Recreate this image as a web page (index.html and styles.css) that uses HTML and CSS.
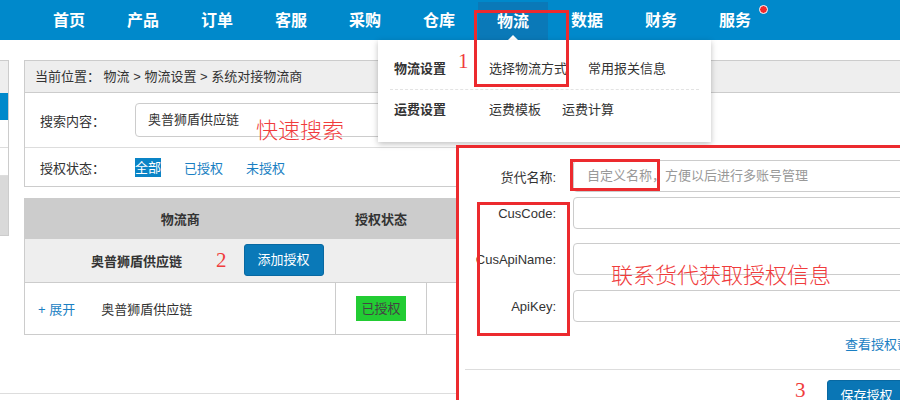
FILE: index.html
```html
<!DOCTYPE html>
<html>
	<head>
		<meta charset="utf-8">
		<title>系统对接物流商</title>
		<link rel="stylesheet" href="styles.css">
	</head>
	<body>
		<ul class="nav">
			<li>首页</li>
			<li>产品</li>
			<li>订单</li>
			<li>客服</li>
			<li>采购</li>
			<li>仓库</li>
			<li class="on">物流</li>
			<li>数据</li>
			<li>财务</li>
			<li class="has-dot">服务<i class="dot"></i></li>
		</ul>
		<div class="wrap">
			<div class="side">
				<div class="side-top"></div>
				<div class="side-on"></div>
				<div class="side-row"></div>
				<div class="side-row"></div>
				<div class="side-gray"></div>
			</div>
			<div class="main">
				<div class="box">
					<div class="crumb">当前位置：&nbsp;物流 &gt; 物流设置 &gt; 系统对接物流商</div>
					<div class="search">
						<span class="lbl">搜索内容：</span>
						<div class="ipt">奥普狮盾供应链</div>
					</div>
					<div class="status">
						<span class="lbl">授权状态：</span>
						<a class="sel" href="#">全部</a>
						<a href="#">已授权</a>
						<a href="#">未授权</a>
					</div>
				</div>
				<table class="list">
					<tr class="head">
						<th class="c1">物流商</th>
						<th class="c2">授权状态</th>
						<th></th>
					</tr>
					<tr class="group">
						<td colspan="3">
							<div class="group-in">
								<b>奥普狮盾供应链</b>
								<span class="num">2</span>
								<a class="btn" href="#">添加授权</a>
							</div>
						</td>
					</tr>
					<tr class="row">
						<td class="c1"><a class="open" href="#">+ 展开</a><span class="name">奥普狮盾供应链</span></td>
						<td class="c2"><span class="badge">已授权</span></td>
						<td></td>
					</tr>
				</table>
			</div>
		</div>
		<div class="foot"></div>

		<!-- 物流下拉菜单 -->
		<div class="drop">
			<div class="drop-row first">
				<b>物流设置</b>
				<a href="#">选择物流方式</a>
				<a href="#">常用报关信息</a>
			</div>
			<div class="drop-row">
				<b>运费设置</b>
				<a href="#">运费模板</a>
				<a href="#">运费计算</a>
			</div>
		</div>

		<!-- 授权弹窗 -->
		<div class="dialog">
			<div class="frow r1">
				<label>货代名称:</label>
				<div class="field ph">自定义名称，方便以后进行多账号管理</div>
			</div>
			<div class="frow r2">
				<label>CusCode:</label>
				<div class="field"></div>
			</div>
			<div class="frow r3">
				<label>CusApiName:</label>
				<div class="field"></div>
			</div>
			<div class="frow r4">
				<label>ApiKey:</label>
				<div class="field"></div>
			</div>
			<div class="help"><a href="#">查看授权帮助</a></div>
			<div class="dialog-foot">
				<span class="num">3</span>
				<a class="btn" href="#">保存授权</a>
			</div>
		</div>

		<!-- 标注 -->
		<div class="mark mark-nav"></div>
		<div class="mark mark-ph"></div>
		<div class="mark mark-lbl"></div>
		<span class="note num n1">1</span>
		<span class="note tip t-search">快速搜索</span>
		<span class="note tip t-info">联系货代获取授权信息</span>
	</body>
</html>
```

FILE: styles.css
```css
*{
	margin: 0;
	padding: 0;
	box-sizing: border-box;
}
ul{
	list-style: none;
}
a{
	text-decoration: none;
	color: #1a7fc3;
}
body{
	position: relative;
	width: 900px;
	height: 400px;
	overflow: hidden;
	background: #fff;
	color: #333;
	font-family: "Liberation Sans", "Noto Sans CJK SC", sans-serif;
	font-size: 13px;
}

/* 顶部导航 */
.nav{
	display: flex;
	gap: 4px;
	height: 40px;
	padding-left: 34px;
	background-color: #0089cb;
}
.nav li{
	position: relative;
	width: 70px;
	height: 40px;
	line-height: 42px;
	text-align: center;
	color: #fff;
	font-size: 16px;
	font-weight: bold;
}
.nav .on{
	margin-top: 2px;
	height: 38px;
	line-height: 40px;
	background-color: #0a79b8;
}
.nav .on:after{
	content: "";
	position: absolute;
	left: 30px;
	bottom: 0;
	border: 5px solid transparent;
	border-bottom-color: #fff;
}
.nav .dot{
	position: absolute;
	top: 5px;
	left: 59px;
	width: 9px;
	height: 9px;
	border-radius: 50%;
	background-color: #f2292c;
	border: 1px solid #fff;
}

/* 主体 */
.wrap{
	display: flex;
	align-items: flex-start;
	padding-top: 20px;
}
.side{
	flex: none;
	width: 9px;
	border: 1px solid #ccc;
	border-left: 0;
}
.side-top{
	height: 32px;
	background: #eee;
}
.side-on{
	height: 27px;
	background: #0089cb;
}
.side-row{
	height: 28px;
	border-bottom: 1px solid #ddd;
}
.side-gray{
	height: 59px;
	background: #d9d9d9;
}
.main{
	flex: none;
	width: 900px;
	margin-left: 15px;
}
.box{
	border: 1px solid #ccc;
}
.crumb{
	height: 32px;
	line-height: 32px;
	padding-left: 10px;
	background: #eee;
	border-bottom: 1px solid #ccc;
}
.search{
	display: flex;
	align-items: center;
	height: 54px;
	padding-left: 15px;
}
.lbl{
	width: 95px;
}
.ipt{
	width: 520px;
	height: 34px;
	line-height: 32px;
	padding-left: 12px;
	border: 1px solid #ccc;
	border-radius: 4px;
}
.status{
	display: flex;
	align-items: center;
	height: 39px;
	padding-left: 15px;
	border-top: 1px solid #ddd;
}
.status a{
	margin-right: 23px;
}
.status .sel{
	line-height: 19px;
	background: #0a84c6;
	color: #fff;
}

/* 列表 */
.list{
	width: 900px;
	margin-top: 11px;
	border-collapse: collapse;
	border-left: 1px solid #ccc;
}
.list th{
	height: 41px;
	background: #ccc;
	font-weight: bold;
}
.list .c1{
	width: 311px;
}
.list .c2{
	width: 91px;
	text-align: center;
}
.group td{
	height: 43px;
	background: #eee;
	border-bottom: 1px solid #ccc;
}
.group-in{
	display: flex;
	align-items: center;
	padding-left: 66px;
}
.group .num{
	margin-left: 34px;
}
.btn{
	display: inline-block;
	height: 32px;
	line-height: 30px;
	padding: 0 13px;
	margin-left: 17px;
	border: 1px solid #0868a1;
	border-radius: 3px;
	background: #0a79b8;
	color: #fff;
	font-size: 13px;
}
.row td{
	height: 52px;
	border-right: 1px solid #ccc;
	border-bottom: 1px solid #ccc;
}
.open{
	margin-left: 13px;
}
.name{
	margin-left: 26px;
}
.badge{
	display: inline-block;
	height: 25px;
	line-height: 25px;
	padding: 0 5px;
	background: #22cc33;
	color: #444;
}
.foot{
	margin-top: 58px;
	border-top: 1px solid #ddd;
}

/* 下拉 */
.drop{
	position: absolute;
	top: 40px;
	left: 378px;
	width: 333px;
	height: 102px;
	padding: 0 12px;
	background: #fff;
	box-shadow: 0 2px 6px rgba(0,0,0,.25);
}
.drop-row{
	display: flex;
	height: 52px;
	line-height: 40px;
	padding-left: 4px;
}
.drop-row.first{
	height: 50px;
	padding-top: 9px;
	border-bottom: 1px dashed #e3e3e3;
}
.drop-row b{
	width: 95px;
}
.drop-row a{
	margin-right: 21px;
	color: #333;
}

/* 弹窗 */
.dialog{
	position: absolute;
	top: 145px;
	left: 456px;
	width: 470px;
	height: 280px;
	padding-top: 12px;
	background: #fff;
	border: 3px solid #ec2a2e;
}
.frow{
	display: flex;
	align-items: center;
	height: 32px;
}
.frow label{
	width: 97px;
	margin-right: 17px;
	text-align: right;
	white-space: nowrap;
}
.field{
	flex: 1;
	height: 32px;
	line-height: 30px;
	padding-left: 13px;
	border: 1px solid #ccc;
	border-radius: 4px;
}
.ph{
	color: #999;
}
.r2{
	margin-top: 5px;
}
.r3{
	margin-top: 14px;
}
.r4{
	margin-top: 15px;
}
.help{
	margin-top: 13px;
	padding-left: 386px;
	line-height: 20px;
	white-space: nowrap;
}
.dialog-foot{
	display: flex;
	align-items: flex-start;
	margin: 14px 0 0 6px;
	padding: 10px 0 0 330px;
	border-top: 1px solid #ddd;
}
.dialog-foot .btn{
	margin-left: 21px;
	background: #0a76b5;
}

/* 标注 */
.num{
	color: #f03c3c;
	font-family: "Liberation Serif", serif;
	font-size: 21px;
	line-height: 20px;
}
.mark{
	position: absolute;
	border: 3px solid #ec2a2e;
}
.mark-nav{
	top: 10px;
	left: 474px;
	width: 95px;
	height: 77px;
}
.mark-ph{
	top: 159px;
	left: 570px;
	width: 90px;
	height: 32px;
}
.mark-lbl{
	top: 202px;
	left: 477px;
	width: 93px;
	height: 134px;
}
.note{
	position: absolute;
}
.n1{
	top: 51px;
	left: 458px;
}
.tip{
	color: #f03c3c;
	font-family: "Noto Sans CJK SC", sans-serif;
	font-weight: 300;
	font-size: 22px;
	line-height: 26px;
}
.t-search{
	top: 115px;
	left: 256px;
}
.t-info{
	top: 260px;
	left: 611px;
}
```
